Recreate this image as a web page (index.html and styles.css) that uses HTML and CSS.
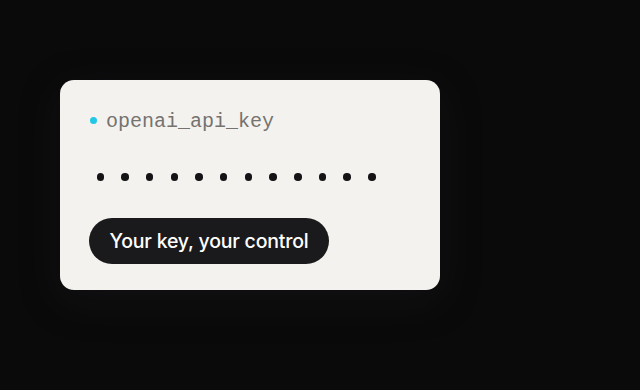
FILE: index.html
```html
<!DOCTYPE html>
<html>
<head>
<meta charset="utf-8">
<link rel="stylesheet" href="styles.css">
</head>
<body>
<div class="card">
  <div class="label"><span class="status"></span><span class="name">openai_api_key</span></div>
  <div class="dots">
    <span></span><span></span><span></span><span></span><span></span><span></span>
    <span></span><span></span><span></span><span></span><span></span><span></span>
  </div>
  <div class="pill">Your key, your control</div>
</div>
</body>
</html>
```
FILE: styles.css
```css
html, body {
  margin: 0;
  height: 100%;
}
body {
  background: #0a0a0b;
  padding: 80px 0 0 60px;
  box-sizing: border-box;
}
.card {
  width: 380px;
  height: 210px;
  box-sizing: border-box;
  background: #f4f2ee;
  border-radius: 14px;
  padding: 30px 29px 0;
  box-shadow: 0 10px 40px rgba(40, 40, 44, 0.25);
}
.label {
  display: flex;
  align-items: center;
  height: 24px;
}
.status {
  width: 7px;
  height: 7px;
  border-radius: 50%;
  background: #22c7e6;
  margin-left: 1px;
  margin-right: 9px;
  margin-bottom: 3px;
}
.name {
  font-family: "Liberation Mono", "DejaVu Sans Mono", monospace;
  font-size: 20px;
  color: #747370;
  line-height: 24px;
}
.dots {
  display: flex;
  gap: 17.2px;
  margin-top: 39px;
  margin-left: 7.5px;
  height: 8px;
  align-items: center;
}
.dots span {
  width: 7.5px;
  height: 7.5px;
  border-radius: 50%;
  background: #141416;
}
.pill {
  margin-top: 37px;
  display: inline-flex;
  align-items: center;
  justify-content: center;
  height: 46px;
  width: 240px;
  box-sizing: border-box;
  border-radius: 23px;
  background: #1a1a1c;
  color: #ffffff;
  font-family: Inter, "Liberation Sans", sans-serif;
  font-weight: 500;
  font-size: 19.5px;
  letter-spacing: -0.2px;
}
```
